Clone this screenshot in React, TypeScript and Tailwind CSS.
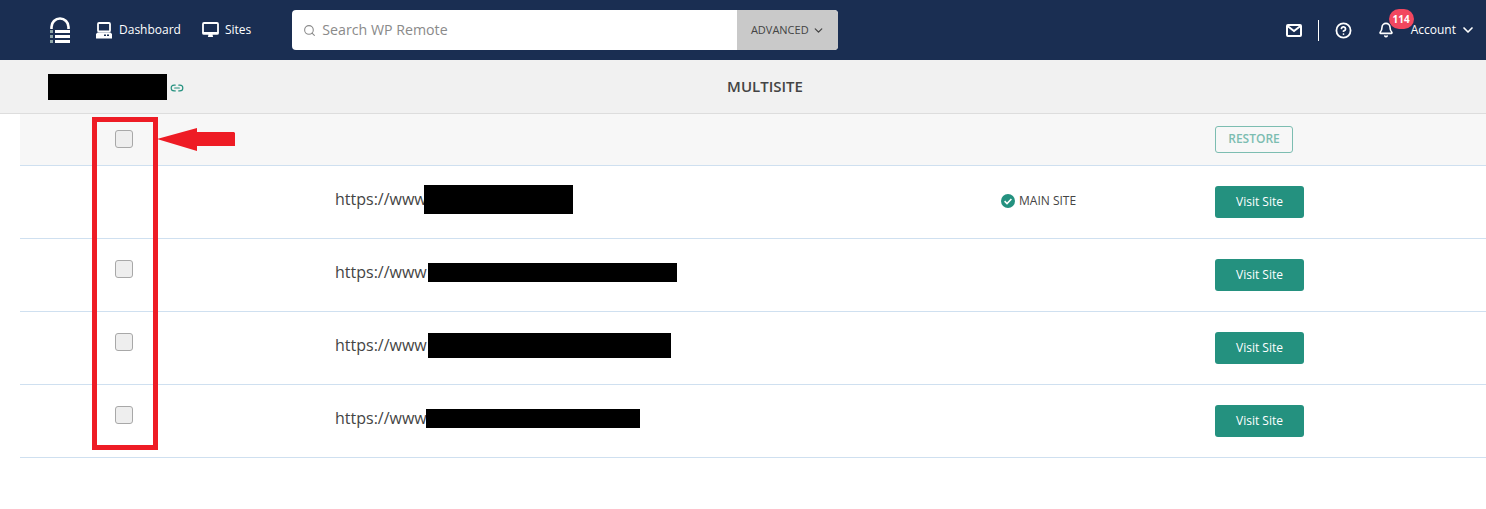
import React from 'react';
import { Search, ChevronDown, CircleHelp, Bell, Link2 } from 'lucide-react';

const SITES = [
    { id: 1, redactW: 'w-[149px]', redactH: 'h-[29px]', gap: 'ml-[-3px]', main: true, check: false },
    { id: 2, redactW: 'w-[249px]', redactH: 'h-[19px]', gap: 'ml-[1px]', main: false, check: true },
    { id: 3, redactW: 'w-[243px]', redactH: 'h-[25px]', gap: 'ml-[1px]', main: false, check: true },
    { id: 4, redactW: 'w-[214px]', redactH: 'h-[19px]', gap: 'ml-[-1px]', main: false, check: true },
];

const Checkbox = () => (
    <div className="w-[18px] h-[18px] rounded-[3px] border border-[#a8a8a8] bg-[#eeeeee]" />
);

const Logo = () => (
    <svg width="21" height="26" viewBox="0 0 21 26" fill="none">
        <path d="M1.500 12V10a8.500 8.500 0 0 1 17 0v2" stroke="#fff" strokeWidth="2.600" />
        <rect x="5" y="13" width="15" height="3" fill="#fff" />
        <rect x="5" y="18" width="15" height="3" fill="#fff" />
        <rect x="5" y="23" width="15" height="3" fill="#fff" />
        <rect x="0" y="13" width="3" height="3" fill="#8fa6a8" />
        <rect x="0" y="18" width="3" height="3" fill="#8fa6a8" />
        <rect x="0" y="23" width="3" height="3" fill="#8fa6a8" />
    </svg>
);

const LaptopIcon = () => (
    <svg width="16" height="17" viewBox="0 0 16 17" fill="none">
        <rect x="2" y="1" width="12" height="8.500" rx="1" stroke="#fff" strokeWidth="1.800" />
        <path d="M1.500 10.500h13l1.500 1.500v4.500H0V12z" fill="#fff" />
        <rect x="8" y="12.500" width="2" height="1.500" fill="#1a2e52" />
        <rect x="11" y="12.500" width="2" height="1.500" fill="#1a2e52" />
    </svg>
);

const MonitorIcon = () => (
    <svg width="17" height="16" viewBox="0 0 17 16" fill="none">
        <rect x="1" y="1" width="15" height="10.500" rx="1" stroke="#fff" strokeWidth="1.800" />
        <path d="M0.500 10h16v2.500H.5zM6.500 12.500h4l.6 2.500H5.900z" fill="#fff" />
    </svg>
);

const MailIcon = () => (
    <svg width="16" height="13" viewBox="0 0 16 13" fill="none">
        <rect x="1" y="1" width="14" height="11" rx="1" stroke="#fff" strokeWidth="2" />
        <path d="M1.500 2l6.500 5 6.500-5" stroke="#fff" strokeWidth="2" />
    </svg>
);

const CheckBadge = () => (
    <svg width="14" height="14" viewBox="0 0 14 14">
        <circle cx="7" cy="7" r="7" fill="#24917f" />
        <path d="M3.600 7.200l2.400 2.300 4.400-4.500" fill="none" stroke="#fff" strokeWidth="1.600" />
    </svg>
);

const RedArrow = () => (
    <svg width="78" height="25" viewBox="0 0 78 25" className="absolute left-[157px] top-[127px]">
        <path d="M0 12 L40 1 L40 5 L77 5 L78 6 L78 19 L40 19 L40 24 Z" fill="#ee1c25" />
    </svg>
);

export default function App() {
    return (
        <div className="relative min-h-[509px] bg-white font-['Open_Sans',sans-serif] overflow-hidden">
            {/* Top nav */}
            <header className="h-[60px] bg-[#1a2e52] flex items-center text-white">
                <div className="ml-[50px] w-[21px] flex items-center"><Logo /></div>
                <a className="ml-[25px] flex items-center gap-[7px] text-[12px]"><LaptopIcon /><span>Dashboard</span></a>
                <a className="ml-[21px] flex items-center gap-[6px] text-[12px]"><MonitorIcon /><span>Sites</span></a>
                <div className="ml-[41px] w-[546px] h-[40px] rounded-[4px] bg-white flex overflow-hidden">
                    <div className="flex-1 flex items-center pl-[11px] gap-[6px] text-[#8a8a8a]">
                        <Search size={13} strokeWidth={2} />
                        <span className="text-[14.200px]">Search WP Remote</span>
                    </div>
                    <div className="w-[101px] bg-[#c9c9c9] flex items-center justify-center gap-[3px] text-[#444] text-[11px] font-medium">
                        ADVANCED <ChevronDown size={13} strokeWidth={2.400} />
                    </div>
                </div>
                <div className="ml-auto flex items-center">
                    <MailIcon />
                    <div className="ml-[16px] w-px h-[21px] bg-white" />
                    <CircleHelp className="ml-[16px]" size={17} strokeWidth={2.500} />
                    <div className="relative ml-[26px]">
                        <Bell size={16} strokeWidth={2.400} />
                        <span className="absolute left-[11px] top-[-13px] w-[25px] h-[20px] rounded-full bg-[#f2475f] flex items-center justify-center text-[10px] font-bold">114</span>
                    </div>
                    <span className="ml-[17px] text-[12px]">Account</span>
                    <ChevronDown className="ml-[4px] mr-[10px]" size={16} strokeWidth={2.500} />
                </div>
            </header>

            {/* Site title bar */}
            <div className="relative h-[54px] bg-[#f1f1f1] border-b border-[#dddddd] flex items-center justify-center">
                <div className="absolute left-[48px] top-[14px] flex items-center">
                    <div className="w-[119px] h-[26px] bg-black" />
                    <Link2 className="ml-[3px] mt-[1px] text-[#24917f]" size={14} strokeWidth={2} />
                </div>
                <span className="text-[15px] font-semibold text-[#444] ml-[44px]">MULTISITE</span>
            </div>

            {/* Table */}
            <div className="ml-[20px]">
                <div className="h-[52px] bg-[#f7f7f7] border-b border-[#cfe0f0] flex items-center">
                    <div className="w-[95px] shrink-0" />
                    <div className="mb-[2px]"><Checkbox /></div>
                    <button className="ml-[1082px] mb-[1px] w-[78px] h-[27px] rounded-[3px] border border-[#7cbdb1] text-[#7cbdb1] text-[12px] font-semibold">RESTORE</button>
                </div>
                {SITES.map(site => (
                    <div key={site.id} className="h-[73px] border-b border-[#cfe0f0] flex items-center">
                        <div className="w-[95px] shrink-0" />
                        <div className="w-[18px] shrink-0 mb-[13px]">{site.check && <Checkbox />}</div>
                        <div className="ml-[202px] w-[666px] shrink-0 flex items-center text-[16px] text-[#444] mt-[-5px]">
                            <span className="mb-[2px]">https://www</span>
                            <div className={`${site.gap} ${site.redactW} ${site.redactH} bg-black`} />
                        </div>
                        <div className="w-[214px] shrink-0 flex items-center gap-[4px] text-[12px] text-[#444] mb-[2px]">
                            {site.main && <><CheckBadge /><span>MAIN SITE</span></>}
                        </div>
                        <button className="w-[89px] h-[32px] rounded-[3px] bg-[#24917f] text-white text-[12px] font-medium">Visit Site</button>
                    </div>
                ))}
            </div>

            {/* Annotation */}
            <div className="absolute left-[92px] top-[117px] w-[66px] h-[333px] border-[5px] border-[#ee1c25]" />
            <RedArrow />
        </div>
    );
}
